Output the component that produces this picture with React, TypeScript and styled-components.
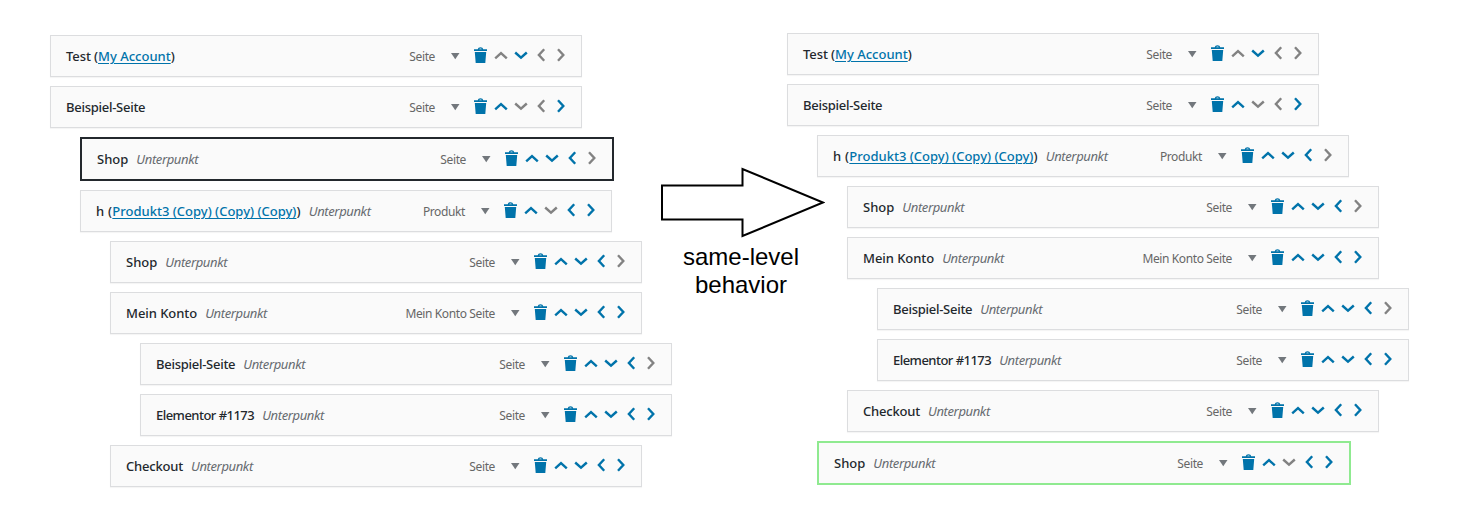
import React from 'react';
import styled, { createGlobalStyle, css } from 'styled-components';

const GlobalStyle = createGlobalStyle`
  * { box-sizing: border-box; }
  body { margin: 0; background: #fff; }
`;

const BLUE = '#0073aa';
const GREY = '#828282';

const Page = styled.main`
  display: flex;
  align-items: flex-start;
  width: 1459px;
  height: 527px;
  overflow: hidden;
  padding-left: 50px;
  font-family: 'Noto Sans', 'Open Sans', sans-serif;
`;

const Tree = styled.ul<{ $top: number; $width: number }>`
  display: flex;
  flex-direction: column;
  gap: 9px;
  flex: none;
  width: ${p => p.$width}px;
  margin: ${p => p.$top}px 0 0;
  padding: 0;
  list-style: none;
`;

type Frame = 'dark' | 'green';

const Row = styled.li<{ $depth: number; $frame?: Frame }>`
  display: flex;
  align-items: center;
  width: 532px;
  height: 42px;
  margin-left: ${p => p.$depth * 30}px;
  padding: 0 15px;
  background: #fafafa;
  border: 1px solid #dcdddf;
  box-shadow: 0 1px 1px rgba(0, 0, 0, 0.04);
  ${p =>
    p.$frame &&
    css`
      width: 534px;
      height: 44px;
      border: 2px solid ${p.$frame === 'dark' ? '#23282d' : '#8fea90'};
      box-shadow: none;
    `}
`;

const Title = styled.span<{ $tracking: number }>`
  font-size: 13px;
  line-height: 20px;
  font-weight: 500;
  letter-spacing: ${p => p.$tracking}px;
  color: #23282d;
  white-space: pre;
`;

const Link = styled.a`
  color: ${BLUE};
  letter-spacing: 0;
  text-decoration: underline;
  text-underline-offset: 2px;
  text-decoration-thickness: 1px;
`;

const SubLabel = styled.span`
  margin-left: 8px;
  font-size: 13px;
  line-height: 20px;
  font-style: italic;
  color: #666b70;
  letter-spacing: -0.38px;
`;

const Kind = styled.span`
  margin-left: auto;
  font-size: 12px;
  line-height: 20px;
  color: #666;
  letter-spacing: -0.38px;
  padding-top: 1px;
`;

const Controls = styled.span`
  display: flex;
  width: 131px;
  height: 20px;
  margin-top: -2px;
`;

const ControlIcon = styled.svg`
  display: block;
  width: 130px;
  height: 20px;
`;

type Item = {
  title: string;
  link?: string;
  depth: number;
  kind?: string;
  moves: string;
  frame?: Frame;
};

const TRACKING: Record<string, number> = {
  'Beispiel-Seite': -0.27,
  'Elementor #1173': -0.53,
  Checkout: -0.2,
  'Mein Konto': -0.05,
  Test: -0.1,
  h: 0.25,
};

const CHEVRONS: [string, string][] = [
  ['u', 'M60.2 13.3 66 8.1l5.8 5.2'],
  ['d', 'M80.2 7.5 86 12.7l5.8-5.2'],
  ['l', 'M109.200 4.300 103.900 10l5.300 5.700'],
  ['r', 'M123 4.300l5.300 5.700-5.300 5.700'],
];

const MenuRow = ({ item }: { item: Item }) => (
  <Row $depth={item.depth} $frame={item.frame}>
    <Title $tracking={TRACKING[item.title] ?? 0}>
      {item.title}
      {item.link && (
        <>
          {' ('}
          <Link>{item.link}</Link>)
        </>
      )}
    </Title>
    {item.depth > 0 && <SubLabel>Unterpunkt</SubLabel>}
    <Kind>{item.kind ?? 'Seite'}</Kind>
    <Controls>
      <ControlIcon viewBox="0 0 130 20" aria-hidden="true">
        <path d="M16 8h8.500l-4.250 6.200z" fill="#72777c" />
        <path
          d="M39 6V4.300h3.800c.2-1.300 1.100-2 2.700-2s2.500.7 2.700 2H52V6zM44.200 4.300h2.600c-.1-.6-.5-.9-1.300-.9s-1.200.3-1.300.9zM39.800 7h11.400L50.300 18h-9.600z"
          fill={BLUE}
          fillRule="evenodd"
        />
        {CHEVRONS.map(([key, d]) => (
          <path
            key={key}
            d={d}
            fill="none"
            stroke={item.moves.includes(key) ? BLUE : GREY}
            strokeWidth="2.400"
          />
        ))}
      </ControlIcon>
    </Controls>
  </Row>
);

const Middle = styled.section`
  display: flex;
  flex-direction: column;
  align-items: center;
  flex: none;
  width: 166px;
  margin: 167px -38px 0 -11px;
`;

const Arrow = styled.svg`
  display: block;
  width: 166px;
  height: 72px;
`;

const Caption = styled.p`
  margin: 4px 0 0;
  padding-right: 2px;
  width: 166px;
  font: 24px/28px 'Liberation Sans', Arial, sans-serif;
  text-align: center;
  color: #000;
`;

const COPY = 'Produkt3 (Copy) (Copy) (Copy)';

const before: Item[] = [
  { title: 'Test', link: 'My Account', depth: 0, moves: 'd' },
  { title: 'Beispiel-Seite', depth: 0, moves: 'ur' },
  { title: 'Shop', depth: 1, moves: 'udl', frame: 'dark' },
  { title: 'h', link: COPY, depth: 1, kind: 'Produkt', moves: 'ulr' },
  { title: 'Shop', depth: 2, moves: 'udl' },
  { title: 'Mein Konto', depth: 2, kind: 'Mein Konto Seite', moves: 'udlr' },
  { title: 'Beispiel-Seite', depth: 3, moves: 'udl' },
  { title: 'Elementor #1173', depth: 3, moves: 'udlr' },
  { title: 'Checkout', depth: 2, moves: 'udlr' },
];

const after: Item[] = [
  { title: 'Test', link: 'My Account', depth: 0, moves: 'd' },
  { title: 'Beispiel-Seite', depth: 0, moves: 'ur' },
  { title: 'h', link: COPY, depth: 1, kind: 'Produkt', moves: 'udl' },
  { title: 'Shop', depth: 2, moves: 'udl' },
  { title: 'Mein Konto', depth: 2, kind: 'Mein Konto Seite', moves: 'udlr' },
  { title: 'Beispiel-Seite', depth: 3, moves: 'udl' },
  { title: 'Elementor #1173', depth: 3, moves: 'udlr' },
  { title: 'Checkout', depth: 2, moves: 'udlr' },
  { title: 'Shop', depth: 1, moves: 'ulr', frame: 'green' },
];

export default function App() {
  return (
    <>
      <GlobalStyle />
      <Page>
        <Tree $top={35} $width={620}>
          {before.map((item, i) => (
            <MenuRow key={i} item={item} />
          ))}
        </Tree>
        <Middle>
          <Arrow viewBox="659 167 166 72" aria-hidden="true">
            <path
              d="M662 185.500H742.500V169L823 202.500 742.500 236V219.500H662Z"
              fill="#fff"
              stroke="#000"
              strokeWidth="2"
            />
          </Arrow>
          <Caption>
            same-level
            <br />
            behavior
          </Caption>
        </Middle>
        <Tree $top={33} $width={622}>
          {after.map((item, i) => (
            <MenuRow key={i} item={item} />
          ))}
        </Tree>
      </Page>
    </>
  );
}
